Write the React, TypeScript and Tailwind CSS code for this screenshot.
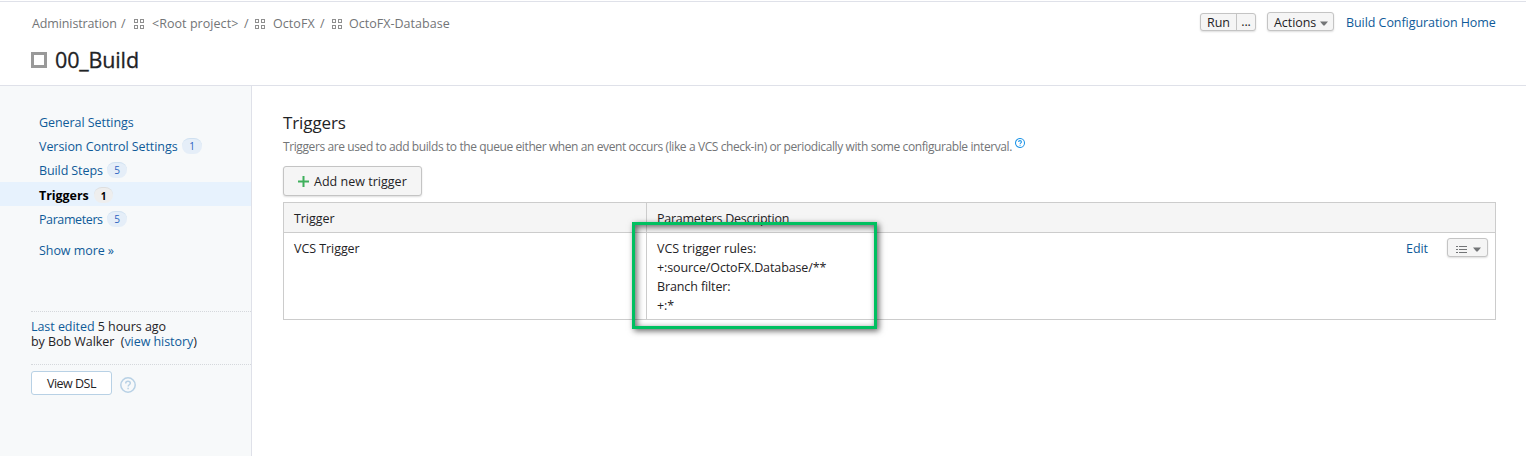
import type { ReactNode } from 'react';

function ProjectIcon() {
  return (
    <svg width="10" height="10" viewBox="0 0 10 10" fill="none" stroke="#8f8f8f" className="shrink-0" shapeRendering="crispEdges">
      <path d="M.5.5h3v3h-3zM6.5.5h3v3h-3zM.5 6.5h3v3h-3zM6.5 6.5h3v3h-3z" />
    </svg>
  );
}

function Caret() {
  return (
    <svg width="8" height="5" viewBox="0 0 8 5" className="shrink-0">
      <path d="M0 0.5h8L4.6 4.6h-1.2z" fill="#737577" />
    </svg>
  );
}

function HelpIcon({ size, color, width }: { size: number; color: string; width: number }) {
  return (
    <svg width={size} height={size} viewBox="0 0 16 16" fill="none" stroke={color} strokeWidth={width} className="shrink-0">
      <circle cx="8" cy="8" r="7.2" />
      <path d="M5.7 6.4c0-1.4 1-2.2 2.3-2.2s2.3.8 2.3 2c0 1.5-2.1 1.6-2.1 3.2" />
      <path d="M8.1 10.7v1.5" />
    </svg>
  );
}

function Badge({ children, active }: { children: ReactNode; active?: boolean }) {
  return (
    <span
      className={
        active
          ? 'flex h-4 w-[19px] items-center justify-center rounded-full border-t border-[#dedede] bg-[#eeeeee] text-[10px] font-bold text-black'
          : 'flex h-4 w-5 items-center justify-center rounded-full border-t border-[#cfe0f0] bg-[#e5eef8] pb-px text-[10px] text-[#2b62c0]'
      }
    >
      {children}
    </span>
  );
}

const crumbs = [
  { name: '<Root project>', box: 'w-[91px]', track: 'tracking-[0.05px]' },
  { name: 'OctoFX', box: 'w-[46px]', track: 'tracking-[0.05px]' },
];

export default function App() {
  return (
    <div className="flex h-[456px] w-[1526px] flex-col overflow-hidden bg-white pt-px font-['Open_Sans','Noto_Sans',sans-serif] text-[12.5px] leading-4 tracking-[-0.06px] whitespace-nowrap text-[#1f2326]">
      <header className="flex h-[85px] shrink-0 justify-between border-y border-[#dfe1e9] pr-[30px] pl-8">
        <div className="flex flex-col">
          <nav className="mt-[14px] flex h-4 items-center text-[#737577]">
            <span className="w-[89px] tracking-[-0.12px]">Administration</span>
            <span className="w-[13px]">/</span>
            {crumbs.map((c) => (
              <span key={c.name} className="flex items-center">
                <ProjectIcon />
                <span className={`ml-2 ${c.box} ${c.track}`}>{c.name}</span>
                <span className="w-3 pl-px">/</span>
              </span>
            ))}
            <span className="ml-px"><ProjectIcon /></span>
            <span className="ml-[7px] tracking-[0.02px]">OctoFX-Database</span>
          </nav>
          <h1 className="-ml-px mt-[14px] flex h-7 items-center text-[21.5px] leading-7 font-medium tracking-[-0.15px] text-[#1f2326] [-webkit-text-stroke:0.3px_#1f2326]">
            <span className="mr-2 size-4 border-3 border-[#999]" />
            00_Build
          </h1>
        </div>
        <div className="flex items-start">
          <div className="mt-[11px] flex h-[18px] rounded-[3px] border border-[#c4c4c4] bg-[#f5f5f5] shadow-[0_1px_2px_#0002]">
            <button className="w-[36px] border-r border-[#c4c4c4] pt-px leading-4">Run</button>
            <button className="w-[18px] leading-4">...</button>
          </div>
          <button className="mt-[10px] ml-[11px] flex h-[19px] w-[67px] items-center justify-between rounded-[3px] border border-[#c4c4c4] bg-[#f5f5f5] pr-[5px] pl-1.5 shadow-[0_1px_2px_#0002]">
            <span className="pt-0.5">Actions</span>
            <span className="pt-[3px]"><Caret /></span>
          </button>
          <a className="mt-[13px] ml-3 w-[150px] text-[#0f5b99]">Build Configuration Home</a>
        </div>
      </header>
      <div className="flex grow">
        <aside className="flex w-[252px] shrink-0 flex-col border-r border-[#dfe1e9] bg-[#f7f9fa] text-[#0f5b99]">
          <a className="mt-6 flex h-6 items-center pt-0.5 pl-[39px]">General Settings</a>
          <a className="flex h-6 items-center pl-[39px]"><span className="w-[143px] pt-0.5 tracking-[-0.06px]">Version Control Settings</span><Badge>1</Badge></a>
          <a className="flex h-6 items-center pl-[39px]"><span className="w-[68px] pt-0.5 tracking-[-0.1px]">Build Steps</span><Badge>5</Badge></a>
          <a className="flex h-6 items-center bg-[#e7f2fd] pt-0.5 pl-[39px] font-bold text-black"><span className="w-[55px] pt-0.5">Triggers</span><Badge active>1</Badge></a>
          <a className="flex h-[25px] items-center pl-[39px]"><span className="w-[68px] pt-0.5 tracking-[-0.4px]">Parameters</span><Badge>5</Badge></a>
          <a className="mt-3 pl-[39px]">Show more »</a>
          <div className="mt-[52px] ml-[31px] border-y border-dotted border-[#d5d8dc] pt-[7px] pb-[15px] leading-[15px] tracking-[-0.05px] text-[#1f2326]">
            <p><span className="text-[#0f5b99]">Last edited</span> 5 hours ago</p>
            <p>by Bob Walker&nbsp; (<span className="text-[#0f5b99]">view history</span>)</p>
          </div>
          <div className="mt-1.5 ml-[31px] flex items-start">
            <button className="h-6 w-[81px] rounded-[3px] border border-[#b8d1e5] bg-white pt-px tracking-[-0.5px] text-[#1f2326]">View DSL</button>
            <span className="mt-1.5 ml-2"><HelpIcon size={16} color="#b8d1e5" width={1.5} /></span>
          </div>
        </aside>
        <main className="flex grow flex-col pr-[30px] pl-[31px]">
          <h2 className="mt-[25px] text-[17px] leading-6 tracking-[-0.1px]">Triggers</h2>
          <p className="mt-1 flex h-4 text-[12px] tracking-[-0.4px] text-[#737577]">
            <span className="w-[732px]">Triggers are used to add builds to the queue either when an event occurs (like a VCS check-in) or periodically with some configurable interval.</span>
            <span className="-mt-px"><HelpIcon size={10} color="#2196e8" width={1.7} /></span>
          </p>
          <button className="mt-[11px] flex h-[30px] w-[139px] items-center rounded-[3px] border border-[#c4c4c4] bg-[#f5f5f5] pl-[14px] shadow-[0_1px_2px_#0002]">
            <svg width="11" height="11" viewBox="0 0 11 11" className="mr-[5px]"><path d="M5.5 0v11M0 5.5h11" stroke="#3fb05c" strokeWidth="2" /></svg>
            <span className="pt-0.5 tracking-[0.02px]">Add new trigger</span>
          </button>
          <div className="relative mt-1.5 flex h-[118px] flex-col border border-[#ccc]">
            <div className="flex h-[30px] shrink-0 items-center border-b border-[#ccc] bg-[#f5f5f5]">
              <span className="h-full w-[363px] border-r border-[#ccc] pt-2 pl-[10px]">Trigger</span>
              <span className="h-full pt-2 pl-[10px] tracking-[-0.25px]">Parameters Description</span>
            </div>
            <div className="flex grow">
              <span className="w-[363px] border-r border-[#ccc] pt-2 pl-[10px]">VCS Trigger</span>
              <div className="grow pt-[6px] pl-[10px] leading-[19px] tracking-[-0.11px]">
                <p className="tracking-normal">VCS trigger rules:</p>
                <p>+:source/OctoFX.Database/**</p>
                <p>Branch filter:</p>
                <p>+:*</p>
              </div>
              <a className="mr-[19px] pt-2 text-[#0f5b99]">Edit</a>
              <button className="mt-[5px] mr-[7px] flex h-[19px] w-[41px] items-center justify-between rounded-[3px] border border-[#c4c4c4] bg-[#f5f5f5] pt-1 pr-1.5 pl-2 shadow-[0_1px_2px_#0002]">
                <svg width="11" height="9" viewBox="0 0 11 9" stroke="#737577" shapeRendering="crispEdges"><path d="M0 1.5h2M3 1.5h8M0 4.5h2M3 4.5h8M0 7.5h2M3 7.5h8" /></svg>
                <Caret />
              </button>
            </div>
            <div className="absolute top-[19px] left-[348px] h-[107px] w-[245px] border-3 border-[#00c060] shadow-[2px_2px_6px_#0009,inset_2px_2px_6px_#0009]" />
          </div>
        </main>
      </div>
    </div>
  );
}
